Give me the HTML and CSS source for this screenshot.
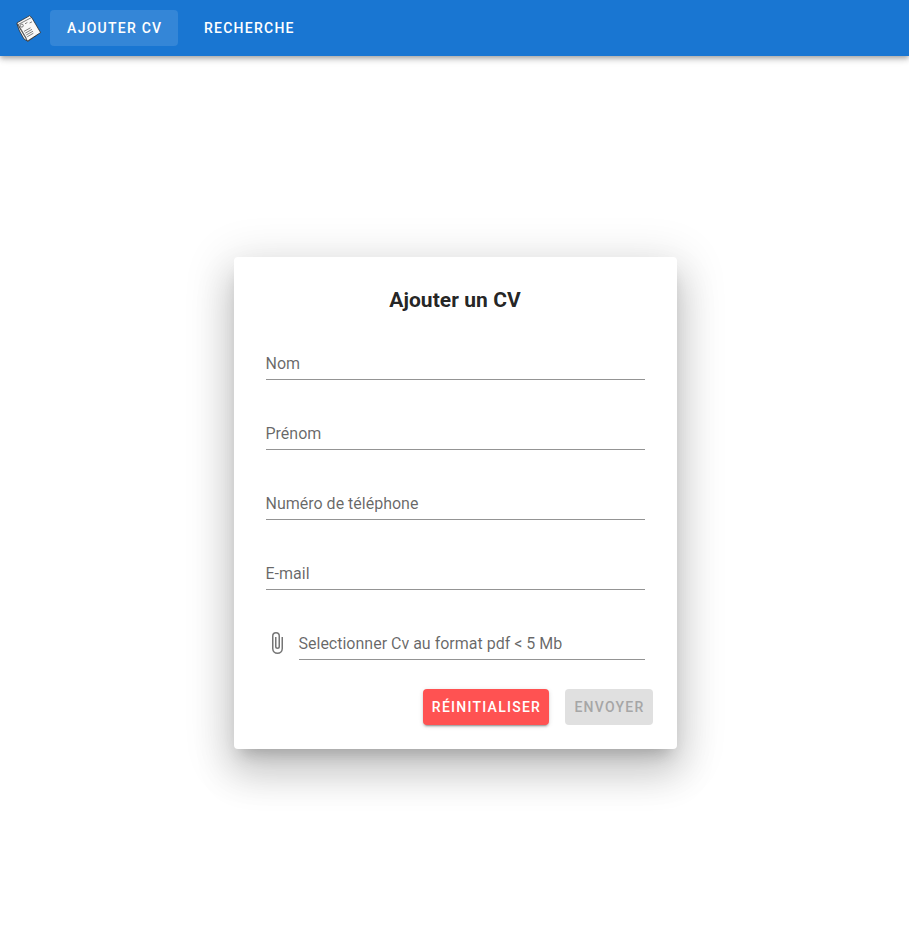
FILE: index.html
```html
<!DOCTYPE html>
<html lang="fr">
<head>
  <meta charset="utf-8">
  <title>Ajouter un CV</title>
  <link rel="stylesheet" href="styles.css">
</head>
<body>
  <header class="app-bar">
    <svg class="logo" viewBox="0 0 26 28" aria-hidden="true">
      <path class="sheet" d="M1 10 3.5 17 8 25 12 27.4 22 20 8 6Z"/>
      <path class="sheet" d="M.8 9 13.8 1.6 16 4 24.6 18.6 11.5 27Z"/>
      <path class="edge" d="M2.5 10.4 15 3.8M2 10 10.5 24.5"/>
      <circle class="ink" cx="5.8" cy="11.6" r="1.5"/>
      <path class="ink" d="M9 9.8 11.4 8.4M13.6 9 16 7.8M8 17.4 14.5 13.8M9.2 19.2 16 15.4M10.2 21 17 17.2M11.2 22.8 17.4 19.2"/>
    </svg>
    <nav class="nav">
      <a class="btn nav-link active">Ajouter CV</a>
      <a class="btn nav-link">Recherche</a>
    </nav>
  </header>
  <main class="main">
    <form class="card">
      <h1 class="title">Ajouter un CV</h1>
      <div class="fields">
        <label class="field">Nom</label>
        <label class="field">Prénom</label>
        <label class="field">Numéro de téléphone</label>
        <label class="field">E-mail</label>
        <div class="file-row">
          <svg class="clip" viewBox="0 0 24 24" aria-hidden="true"><path d="M16.5,6V17.5A4,4 0 0,1 12.5,21.5A4,4 0 0,1 8.5,17.5V5A2.5,2.5 0 0,1 11,2.5A2.5,2.5 0 0,1 13.5,5V15.5A1,1 0 0,1 12.5,16.5A1,1 0 0,1 11.5,15.5V6H10V15.5A2.5,2.5 0 0,0 12.5,18A2.5,2.5 0 0,0 15,15.5V5A4,4 0 0,0 11,1A4,4 0 0,0 7,5V17.5A5.5,5.5 0 0,0 12.5,23A5.5,5.5 0 0,0 18,17.5V6H16.5Z"/></svg>
          <label class="field">Selectionner Cv au format pdf &lt; 5 Mb</label>
        </div>
      </div>
      <div class="actions">
        <button type="reset" class="btn reset">Réinitialiser</button>
        <button type="submit" class="btn send" disabled>Envoyer</button>
      </div>
    </form>
  </main>
</body>
</html>
```
FILE: styles.css
```css
* {
  box-sizing: border-box;
}

body {
  margin: 0;
  height: 950px;
  display: flex;
  flex-direction: column;
  background: #fff;
  font: 16px/24px Roboto, sans-serif;
  overflow: hidden;
}

.app-bar {
  height: 56px;
  flex: none;
  display: flex;
  align-items: center;
  padding: 0 16px;
  background: #1976d2;
  box-shadow: 0 2px 4px -1px rgba(0, 0, 0, .2), 0 4px 5px 0 rgba(0, 0, 0, .14), 0 1px 10px 0 rgba(0, 0, 0, .12);
}

.logo {
  width: 26px;
  height: 28px;
  margin-right: 8px;
}

.sheet {
  fill: #f8f8f8;
  stroke: #2b2b2b;
  stroke-width: .8;
}

.edge,
.ink {
  fill: none;
  stroke: #555;
  stroke-width: .75;
}

.nav {
  display: flex;
  gap: 10px;
}

.btn {
  display: flex;
  align-items: center;
  justify-content: center;
  height: 36px;
  border: 0;
  border-radius: 4px;
  font: 500 14px/20px Roboto, sans-serif;
  letter-spacing: 1.25px;
  text-transform: uppercase;
  white-space: nowrap;
}

.nav-link {
  padding: 0 16px;
  color: #fff;
}

.active {
  width: 128px;
  padding: 0 15px 0 16.5px;
  background: #3486d7;
}

.main {
  flex: 1;
  padding: 201px 232.5px 0 233.5px;
}

.card {
  height: 492px;
  padding: 27px 24px 24px 32px;
  border-radius: 4px;
  background: #fff;
  box-shadow: 0 11px 15px -7px rgba(0, 0, 0, .2), 0 24px 38px 3px rgba(0, 0, 0, .14), 0 9px 46px 8px rgba(0, 0, 0, .12);
}

.title {
  margin: 0 8px 0 0;
  font-size: 21px;
  font-weight: 700;
  line-height: 32px;
  letter-spacing: .06px;
  text-align: center;
  color: rgba(0, 0, 0, .87);
}

.fields {
  display: flex;
  flex-direction: column;
  gap: 38px;
  margin: 32px 8px 0 0;
}

.field {
  display: block;
  height: 32px;
  padding-top: 3px;
  border-bottom: 1px solid #949494;
  color: rgba(0, 0, 0, .6);
  line-height: 26px;
}

.file-row {
  display: flex;
  gap: 9px;
}

.file-row .field {
  flex: 1;
}

.clip {
  width: 24px;
  height: 24px;
  margin: 3px .6px 0 -.6px;
  fill: #757575;
}

.actions {
  display: flex;
  justify-content: flex-end;
  gap: 16px;
  margin-top: 29px;
}

.reset {
  width: 126px;
  padding: 0 0 0 2px;
  background: #ff5252;
  color: #fff;
  box-shadow: 0 3px 1px -2px rgba(0, 0, 0, .2), 0 2px 2px 0 rgba(0, 0, 0, .14), 0 1px 5px 0 rgba(0, 0, 0, .12);
}

.send {
  width: 88px;
  padding: 0 0 0 2px;
  background: #e0e0e0;
  color: #a6a6a6;
}
```
